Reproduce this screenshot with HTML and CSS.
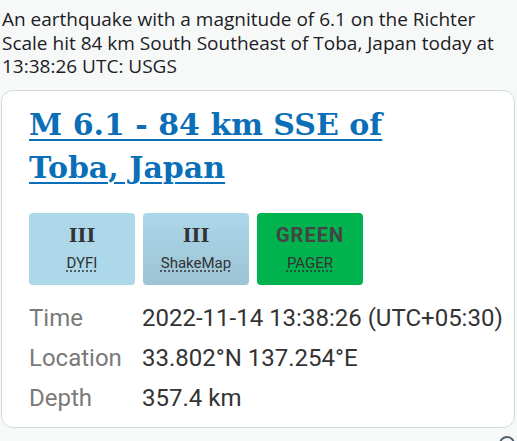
FILE: index.html
```html
<!DOCTYPE html>
<html>
<head>
<meta charset="utf-8">
<link rel="stylesheet" href="styles.css">
</head>
<body>
<p class="tweet">An earthquake with a magnitude of 6.1 on the Richter<br>Scale hit 84 km South Southeast of Toba, Japan today at<br>13:38:26 UTC: USGS</p>
<div class="card">
  <h1 class="title"><a href="#">M 6.1 - 84 km SSE of Toba, Japan</a></h1>
  <div class="badges">
    <div class="badge dyfi"><span class="lvl">III</span><abbr>DYFI</abbr></div>
    <div class="badge shake"><span class="lvl">III</span><abbr>ShakeMap</abbr></div>
    <div class="badge pager"><span class="lvl sans">GREEN</span><abbr>PAGER</abbr></div>
  </div>
  <dl class="details">
    <dt>Time</dt><dd>2022-11-14 13:38:26 (UTC+05:30)</dd>
    <dt>Location</dt><dd>33.802°N 137.254°E</dd>
    <dt>Depth</dt><dd>357.4 km</dd>
  </dl>
</div>
<span class="peek"></span>
</body>
</html>
```
FILE: styles.css
```css
html, body { margin: 0; padding: 0; }
body {
  background: #f7f9f9;
  width: 517px;
  height: 441px;
  overflow: hidden;
  position: relative;
}
.tweet {
  margin: 0;
  padding: 8px 0 0 2px;
  font-family: "Open Sans", "Noto Sans", sans-serif;
  font-size: 19px;
  line-height: 23.5px;
  color: #1c2024;
  white-space: nowrap;
}
.card {
  margin: 11px 0 0 1px;
  background: #fff;
  border: 1px solid #cfd9de;
  border-radius: 12px;
  padding: 0 0 0 27px;
  box-sizing: border-box;
  width: 514px;
  height: 338px;
}
.title {
  margin: 0;
  padding-top: 12px;
  max-width: 380px;
  font-family: "DejaVu Serif", serif;
  font-weight: bold;
  font-size: 30px;
  line-height: 43px;
}
.title a {
  color: #0a6fb7;
  text-decoration: underline;
  text-decoration-thickness: 2px;
  text-underline-offset: 4px;
}
.badges {
  display: flex;
  gap: 8px;
  margin-top: 24px;
}
.badge {
  width: 106px;
  height: 72px;
  border-radius: 4px;
  display: flex;
  flex-direction: column;
  align-items: center;
  padding-top: 10px;
  box-sizing: border-box;
  color: #333;
}
.dyfi { background: #acd8ea; }
.shake { background: linear-gradient(#acd7ea, #9cc3d4); }
.pager { background: #00b34f; }
.lvl {
  font-family: "DejaVu Serif", serif;
  font-weight: bold;
  font-size: 19px;
  line-height: 24px;
  color: #333;
}
.lvl.sans {
  font-family: Roboto, sans-serif;
  font-weight: bold;
  font-size: 20px;
  letter-spacing: 1px;
  color: #444;
}
abbr {
  margin-top: 6px;
  font-family: Roboto, sans-serif;
  font-size: 15px;
  line-height: 20px;
  color: #333;
  text-decoration: underline dotted;
  text-underline-offset: 3px;
}
.details {
  margin: 19px 0 0 0;
  display: grid;
  grid-template-columns: 113px auto;
  row-gap: 12px;
  font-family: Roboto, sans-serif;
  font-size: 24px;
  line-height: 28px;
}
.details dt { color: #7a7a7a; margin: 0; }
.details dd { color: #333; margin: 0; }
.peek {
  position: absolute;
  left: 499px;
  top: 436px;
  width: 12px;
  height: 12px;
  border: 2px solid #536471;
  border-radius: 50%;
}
```
